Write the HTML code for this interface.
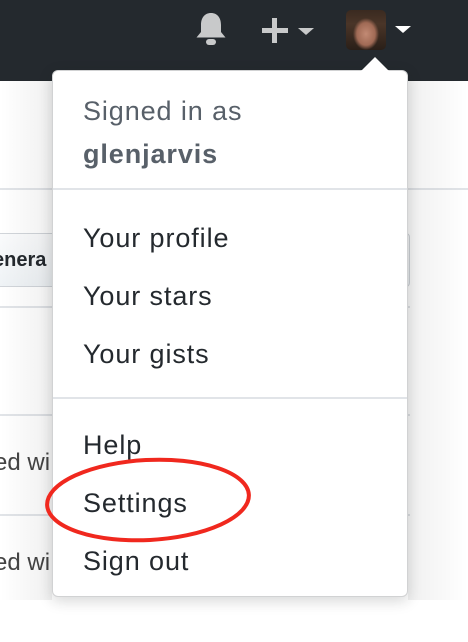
<!DOCTYPE html>
<html><head><meta charset="utf-8"><style>
*{margin:0;padding:0;box-sizing:border-box}
body{width:468px;height:642px;overflow:hidden;background:#fff;font-family:"Liberation Sans",Helvetica,Arial,sans-serif;position:relative;color:#24292e}
.hdr{position:absolute;left:0;top:0;width:468px;height:81px;background:#24292e}
.line{position:absolute;height:2px;background:#e1e4e8}
.dd{position:absolute;left:52px;top:70px;width:356px;height:527px;background:#fff;border:1px solid rgba(27,31,35,.2);border-radius:6px;box-shadow:0 4px 14px rgba(27,31,35,.18)}
.t{position:absolute;left:30px;font-size:27px;line-height:30px;color:#24292e;letter-spacing:0.9px}
.sep{position:absolute;left:0;right:0;height:2px;background:#e1e4e8}
</style></head><body>
<div class="hdr"></div>
<svg style="position:absolute;left:194px;top:11px" width="34" height="36" viewBox="0 0 34 36"><path d="M17 2c-6.5 0-10 5-10 12v7l-4.5 5.5h29L27 21v-7c0-7-3.5-12-10-12z" fill="#c8c9ca"/><rect x="12" y="28" width="10" height="6" rx="3" fill="#c8c9ca"/></svg>
<div style="position:absolute;left:262px;top:28px;width:26px;height:5px;background:#c8c9ca"></div>
<div style="position:absolute;left:272px;top:18px;width:5px;height:25px;background:#c8c9ca"></div>
<div style="position:absolute;left:298px;top:28px;width:0;height:0;border-left:8px solid transparent;border-right:8px solid transparent;border-top:7px solid #c8c9ca"></div>
<div style="position:absolute;left:346px;top:10px;width:40px;height:40px;border-radius:5px;background:radial-gradient(ellipse 13px 16px at 20px 24px,#c28a74 0,#a06a55 70%,transparent 100%),linear-gradient(#3a2a20 0,#4a3528 35%,#2a1f18 100%)"></div>
<div style="position:absolute;left:395px;top:26px;width:0;height:0;border-left:8px solid transparent;border-right:8px solid transparent;border-top:7px solid #fff"></div>
<div class="line" style="left:0;top:188px;width:468px"></div>
<div style="position:absolute;left:-20px;top:233px;width:430px;height:54px;border:1px solid #d1d5da;border-radius:4px;background:linear-gradient(#fafbfc,#eff3f6);font-weight:bold;font-size:20px;line-height:52px;padding-left:12px">enera</div>
<div class="line" style="left:0;top:306px;width:410px"></div>
<div class="line" style="left:0;top:414px;width:410px"></div>
<div class="line" style="left:0;top:514px;width:410px"></div>
<div style="position:absolute;left:-6px;top:449px;font-size:24px;color:#444">ed wi</div>
<div style="position:absolute;left:-6px;top:549px;font-size:24px;color:#444">ed wi</div>
<div style="position:absolute;left:408px;top:80px;width:60px;height:520px;background:linear-gradient(90deg,rgba(0,0,0,.06),rgba(255,255,255,0))"></div>
<div style="position:absolute;left:0;top:80px;width:52px;height:520px;background:linear-gradient(270deg,rgba(0,0,0,.06),rgba(255,255,255,0))"></div>
<div style="position:absolute;left:361px;top:57px;width:0;height:0;border-left:14px solid transparent;border-right:14px solid transparent;border-bottom:14px solid #fff;z-index:3"></div>
<div class="dd">
<div class="t" style="top:25px;color:#586069">Signed in as</div>
<div class="t" style="top:68px;font-weight:bold;color:#586069">glenjarvis</div>
<div class="sep" style="top:117px"></div>
<div class="t" style="top:152px">Your profile</div>
<div class="t" style="top:210px">Your stars</div>
<div class="t" style="top:268px">Your gists</div>
<div class="sep" style="top:326px"></div>
<div class="t" style="top:359px">Help</div>
<div class="t" style="top:417px">Settings</div>
<div class="t" style="top:475px">Sign out</div>
</div>
<svg style="position:absolute;left:0;top:0" width="468" height="642"><ellipse cx="148" cy="500" rx="101" ry="40" fill="none" stroke="#f0281e" stroke-width="4" transform="rotate(-3 148 500)"/></svg>
</body></html>
